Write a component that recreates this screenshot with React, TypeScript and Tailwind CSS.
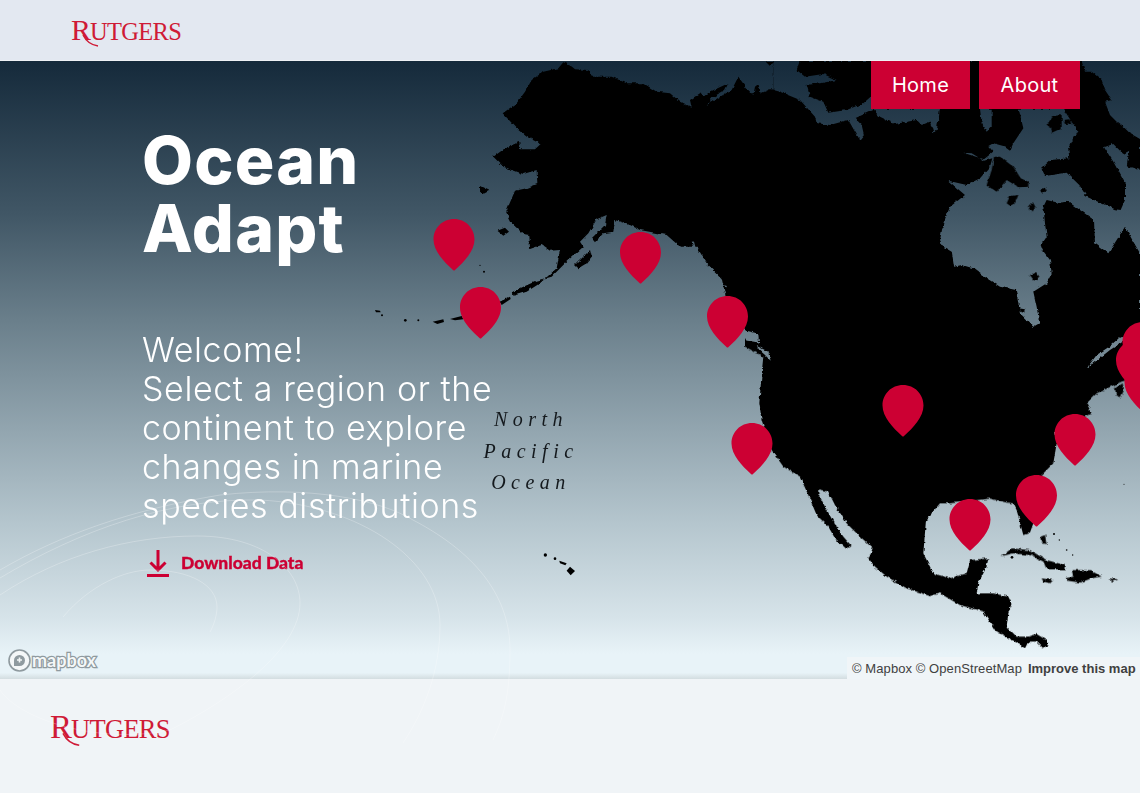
const Z6 = "translate(480 60) scale(0.33333)";
const Z7 = "translate(780 60) scale(0.33333)";
const Z3 = "translate(700 340) scale(0.33333)";
const Z5 = "translate(360 200) scale(0.33333)";

const pins: [number, number][] = [
  [454, 219], [480.5, 287], [640.5, 232], [727.5, 296], [752, 423], [903, 385],
  [1143, 322], [1136.5, 340], [1145, 362], [1075, 414], [1036.5, 475], [970, 499],
];

function MapCanvas() {
  return (
    <svg viewBox="0 61 1140 618" className="absolute inset-0 h-[618px] w-[1140px]">
      <defs>
        <filter id="rough" filterUnits="userSpaceOnUse" x="0" y="61" width="1140" height="618">
          <feTurbulence type="fractalNoise" baseFrequency="0.22" numOctaves="3" seed="4" />
          <feDisplacementMap in="SourceGraphic" scale="3.5" xChannelSelector="R" yChannelSelector="G" />
        </filter>
        <mask id="water" maskUnits="userSpaceOnUse" x="0" y="61" width="1140" height="618">
          <rect x="0" y="61" width="1140" height="618" fill="white" />
          <g transform={Z7} fill="black">
            <polygon points="-20,0 60,0 50,30 75,50 130,42 170,60 130,68 80,75 90,110 130,125 145,158 200,150 250,130 272,110 300,146 480,146 470,210 460,220 450,185 425,195 410,180 345,192 300,170 280,150 225,175 245,195 252,225 240,240 225,215 205,180 150,195 110,190 105,170 60,120 0,95 -20,90" />
            <polygon points="600,146 635,146 635,200 620,215 605,190" />
            <polygon points="905,0 1095,0 1095,245 1050,220 1030,200 1010,185 990,165 975,125 995,120 975,90 965,60 935,35 915,35" />
            <polygon points="480,540 490,490 510,440 555,405 505,362 560,375 600,355 630,320 637,295 612,302 575,280 550,278 612,298 640,275 625,258 640,250 670,258 690,272 700,250 730,205 716,146 850,146 892,212 865,268 868,295 812,300 785,325 795,348 860,338 898,375 920,410 1005,448 1022,450 1035,420 1035,370 1000,305 972,262 1000,252 1030,282 1048,272 1040,318 1080,330 1095,330 1095,590 1080,580 1060,545 1035,500 985,580 945,550 942,480 865,425 835,428 800,420 790,440 795,490 800,530 780,560 810,600 815,640 800,670 760,695 770,740 778,790 760,800 720,760 708,690 660,680 620,655 580,625 545,615 522,620 515,575 490,560" />
          </g>
          <g transform={Z6} stroke="black" fill="none" strokeWidth="4">
            <polyline points="640,545 650,585 672,625 692,665 740,680" />
            <polyline points="612,560 650,600 665,650 700,690" />
            <polygon points="790,812 832,822 835,845 800,840" fill="black" />
          </g>
          <g transform={Z3} fill="black">
            <polygon points="1160,85 1190,45 1225,22 1260,-8 1275,-10 1268,5 1230,30 1195,58" />
            <polygon points="170,18 205,35 212,62 195,45 178,30" />
          </g>
        </mask>
      </defs>
      <g filter="url(#rough)">
        <g mask="url(#water)" fill="black">
          <polygon transform={Z6} points="68,160 110,130 135,95 155,60 190,35 235,25 250,7 270,15 285,28 325,30 335,50 395,50 440,70 490,70 530,95 570,100 600,125 635,143 630,120 660,100 670,110 690,95 745,70 735,90 700,110 680,135 720,110 755,90 775,50 800,85 820,105 825,80 835,72 843,100 870,88 900,90 900,850 835,850 835,825 800,815 745,760 735,700 725,655 680,610 650,560 600,560 560,525 480,510 450,495 405,480 400,515 370,520 345,547 335,535 375,495 380,465 350,478 325,520 300,545 310,560 265,600 215,650 170,662 130,680 98,695 100,707 140,695 180,670 230,625 240,570 210,572 185,555 150,567 148,525 130,522 95,490 78,455 105,392 140,385 172,372 170,330 130,342 70,320 40,290 75,265 118,245 120,268 165,268 182,252 140,230 115,210" />
          <polygon transform={Z7} points="-20,0 1095,0 1095,845 -20,845" />
          <polygon transform={Z3} points="135,-5 1320,-5 1320,110 1265,125 1190,160 1160,190 1175,220 1065,270 1070,310 1060,370 1030,400 1000,470 1000,550 990,578 970,585 950,510 940,490 920,488 870,476 750,490 720,490 678,540 670,640 700,700 750,715 800,700 810,660 865,655 860,680 835,730 830,760 880,760 925,770 935,790 925,820 920,860 950,890 985,890 1010,882 1040,900 1043,915 1030,925 1010,905 985,905 975,925 945,905 900,880 885,870 850,815 780,795 720,760 690,768 620,745 560,710 525,680 505,655 518,625 470,580 440,550 405,495 385,455 355,448 355,460 375,500 400,545 430,590 455,618 440,627 405,595 385,560 350,525 325,465 300,410 250,380 215,330 185,240 178,190 185,100 190,50 135,20" />
        </g>
        <g fill="black">
          <g transform={Z6}>
            <polygon points="855,3 885,3 870,18" />
            <polygon points="285,615 310,590 330,570 335,590 320,610 295,625" />
            <polygon points="52,512 75,503 87,515 70,527" />
            <polygon points="0,378 28,392 10,402 0,395" />
            <polygon points="60,725 90,712 75,725 62,733" />
          </g>
          <g transform={Z7}>
            <polygon points="620,375 650,395 680,360 715,382 745,380 745,365 722,355 700,320 660,290 642,290 635,330" />
            <polygon points="680,430 690,408 715,405 705,430 690,437" />
            <polygon points="747,440 758,426 766,440 758,458" />
            <polygon points="780,392 795,382 800,392 788,398" />
            <polygon points="803,190 820,168 845,165 845,205 815,218" />
            <polygon points="850,180 868,178 875,190 855,192" />
            <polygon points="750,645 768,636 778,650 762,662" />
            <polygon points="715,745 735,748 732,758 720,755" />
          </g>
          <g transform={Z3}>
            <polygon points="905,648 935,625 990,630 1040,660 1095,675 1098,688 1040,688 1030,665 990,645 940,640" />
            <polygon points="1095,715 1120,710 1115,690 1170,690 1205,710 1175,715 1140,728 1100,722" />
            <polygon points="1025,715 1060,720 1050,730 1030,725" />
            <polygon points="1225,715 1255,718 1240,725" />
            <polygon points="1022,590 1035,585 1040,612 1028,610" />
            <polygon points="1245,145 1268,130 1272,150 1262,172 1248,165" />
          </g>
        </g>
      </g>
      <g fill="black">
        <g transform={Z3}>
          <circle cx="1062" cy="582" r="3" /><circle cx="1078" cy="600" r="2" /><circle cx="1100" cy="630" r="2.5" /><circle cx="1118" cy="645" r="2" /><circle cx="1272" cy="433" r="1.5" /><circle cx="936" cy="652" r="4" />
        </g>
        <g transform={Z5}>
          <polygon points="45,330 60,332 62,337 48,337" /><circle cx="66" cy="346" r="3" /><circle cx="136" cy="361" r="4" /><circle cx="175" cy="361" r="3" />
          <polygon points="218,365 250,358 252,366 232,372" />
          <polygon points="270,357 305,348 310,358 285,361" />
          <polygon points="420,305 450,290 452,297 425,315" />
          <circle cx="360" cy="196" r="2" /><circle cx="372" cy="215" r="3" />
          <circle cx="556" cy="1065" r="5" /><circle cx="585" cy="1076" r="4" />
          <polygon points="598,1082 620,1090 616,1096 600,1090" />
          <polygon points="630,1100 645,1113 632,1126 620,1112" />
        </g>
      </g>
      <g className="[font-family:'Liberation_Serif',serif] italic" fill="#14191d" fontSize="20" textAnchor="middle" letterSpacing="5.5">
        <text x="531" y="426">North</text>
        <text x="531" y="458">Pacific</text>
        <text x="531" y="489">Ocean</text>
      </g>
      {pins.map(([x, y]) => (
        <path key={`${x}-${y}`} transform={`translate(${x - 20.5} ${y})`} fill="#cc0033" d="M20.5 0C32 0 41 9 41 20.5C41 32 30.5 43 21.5 51Q20.5 52 19.5 51C10.5 43 0 32 0 20.5C0 9 9 0 20.5 0Z" />
      ))}
    </svg>
  );
}

function RutgersLogo({ big }: { big?: boolean }) {
  return (
    <div className={`relative flex items-baseline [font-family:'Liberation_Serif',serif] text-[#cf1a36] ${big ? "h-[36px] leading-[32px]" : "h-[32px] leading-[30px]"}`}>
      <span className={big ? "text-[33px] tracking-[-1px]" : "text-[30px] tracking-[-1px]"}>R</span>
      <span className={big ? "text-[26.5px] tracking-[-0.7px]" : "text-[24.5px] tracking-[-0.7px]"}>UTGERS</span>
      <svg viewBox="0 0 110 30" className={`absolute left-0 top-0 ${big ? "h-[36px] w-[119px]" : "h-[32px] w-[110px]"} overflow-visible`} fill="none">
        <path d="M12 19C15 25 20 29 27 30" stroke="#cf1a36" strokeWidth="1.4" />
      </svg>
    </div>
  );
}

export default function App() {
  return (
    <div className="relative h-[793px] w-[1140px] overflow-hidden bg-[#f0f4f7]">
      <header className="flex h-[61px] items-start border-b border-[#eef1f5] bg-[#e3e8f1] pl-[71px] pt-[15px]">
        <RutgersLogo />
      </header>
      <main className="relative h-[618px] bg-[linear-gradient(180deg,#152a3b_0%,#415766_25%,#6a7f8b_42%,#93a6b0_60%,#b5c6ce_75%,#d6e3e9_90%,#e8f3f8_96%,#e8f3f8_99%,#d3dde0_100%)]">
        <MapCanvas />
        <nav className="absolute right-[60px] top-0 flex gap-[9px] [font-family:Inter,sans-serif] text-[20px] tracking-[0.3px] text-white">
          <a className="flex h-[48px] w-[99px] items-center justify-center bg-[#cc0033]">Home</a>
          <a className="flex h-[48px] w-[101px] items-center justify-center bg-[#cc0033]">About</a>
        </nav>
        <section className="relative w-[400px] pl-[142px] pt-[65px]">
          <h1 className="[font-family:Inter,sans-serif] text-[66px] font-extrabold leading-[68px] tracking-[1.2px] text-white">
            Ocean
            <br />
            Adapt
          </h1>
          <p className="mt-[68px] w-[372px] [font-family:Inter,sans-serif] text-[34px] font-light leading-[39px] tracking-[0.6px] text-white">
            Welcome!
            <br />
            Select a region or the continent to explore changes in marine species distributions
          </p>
          <a className="mt-[25px] flex items-center gap-[12px] pl-[5px] [font-family:Lato,sans-serif] text-[17.5px] font-black text-[#cc0033] [-webkit-text-stroke:0.3px_#cc0033]">
            <svg viewBox="0 0 22 27" className="h-[27px] w-[22px]" fill="none" stroke="#cc0033" strokeWidth="3">
              <path d="M11 0V20M3.5 12.5L11 20L18.5 12.5" />
              <path d="M0 25.5H22" />
            </svg>
            Download Data
          </a>
        </section>
        <div className="absolute bottom-[7px] left-[8px] flex items-center gap-[1px]">
          <svg viewBox="0 0 23 23" className="h-[23px] w-[23px]">
            <circle cx="11.5" cy="11.5" r="10.5" fill="#f4f7f8" stroke="#8f9a9f" strokeWidth="1.6" />
            <path d="M6 17V11.5A5.5 5.5 0 1 1 11.5 17Z" fill="#8f9a9f" />
            <path d="M11.5 8.5V13.5M9 11H14" stroke="#f4f7f8" strokeWidth="1.6" />
          </svg>
          <span className="[font-family:Lato,sans-serif] text-[18px] font-bold leading-[23px] text-[#f4f7f8] [-webkit-text-stroke:2.5px_#8f9a9f] [paint-order:stroke_fill]">mapbox</span>
        </div>
        <div className="absolute bottom-0 right-0 flex h-[22px] w-[293px] items-center gap-[6px] bg-[#f0f5f8] pl-[5px] pt-[1px] [font-family:'Liberation_Sans',sans-serif] text-[13px] text-[#404040]">
          <span className="tracking-[0.08px]">© Mapbox © OpenStreetMap</span>
          <span className="font-bold">Improve this map</span>
        </div>
      </main>
      <footer className="pl-[50px] pt-[32px]">
        <RutgersLogo big />
      </footer>
      <svg viewBox="0 0 1140 793" className="pointer-events-none absolute inset-0 h-[793px] w-[1140px]" fill="none" stroke="#ffffff" strokeOpacity="0.25" strokeWidth="1">
        <path d="M63 617C90 585 125 570 150 570C190 570 217 585 217 607C217 615 214 625 210 632" />
        <path d="M0 595C60 555 130 536 197 536C265 536 300 570 300 603C300 650 230 700 170 730C100 745 20 720 0 690" />
        <path d="M0 578C80 530 170 498 260 500C360 505 440 560 440 625C440 670 425 710 403 743" />
        <path d="M0 570C60 535 130 510 220 495C310 485 380 500 413 520C480 555 510 600 510 650C510 690 505 715 493 740" />
      </svg>
    </div>
  );
}
